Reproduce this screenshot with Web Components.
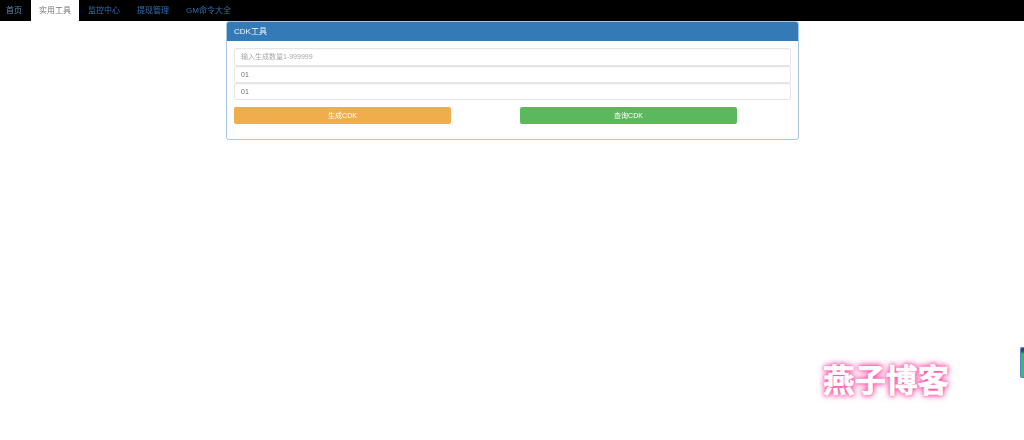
<!DOCTYPE html>
<html>
<head>
<meta charset="utf-8">
<title>CDK工具</title>
<style>
  html, body { margin: 0; padding: 0; background: #fff; }
  body { width: 1024px; height: 440px; overflow: hidden; position: relative; font-family: "Liberation Sans", "Noto Sans CJK SC", sans-serif; }
</style>
</head>
<body>
<top-nav>
  <nav-item>首页</nav-item>
  <nav-item active>实用工具</nav-item>
  <nav-item>监控中心</nav-item>
  <nav-item>提现管理</nav-item>
  <nav-item>GM命令大全</nav-item>
</top-nav>

<cdk-panel heading="CDK工具">
  <text-field placeholder="输入生成数量1-999999"></text-field>
  <text-field value="01"></text-field>
  <text-field value="01"></text-field>
  <div slot="actions"><action-button kind="warning">生成CDK</action-button></div>
  <div slot="actions"><action-button kind="success">查询CDK</action-button></div>
</cdk-panel>

<blog-mark>燕子博客</blog-mark>
<side-tab></side-tab>

<script>
  class TopNav extends HTMLElement {
    constructor() {
      super();
      this.attachShadow({mode: 'open'}).innerHTML = `
        <style>
          :host { display: flex; height: 21px; background: #000; }
        </style>
        <slot></slot>`;
    }
  }

  class NavItem extends HTMLElement {
    constructor() {
      super();
      this.attachShadow({mode: 'open'}).innerHTML = `
        <style>
          :host { display: block; height: 21px; line-height: 21px; padding: 0 8.5px; font-size: 8px; color: #2f6fb3; }
          :host(:first-child) { padding: 0 9px 0 6px; color: #5f8db8; }
          :host(:nth-child(3)) { padding-left: 9px; }
          :host([active]) { background: #fff; color: #777; padding: 0 8px; }
          span { display: block; filter: blur(.3px); }
        </style>
        <span><slot></slot></span>`;
    }
  }

  class CdkPanel extends HTMLElement {
    constructor() {
      super();
      this.attachShadow({mode: 'open'}).innerHTML = `
        <style>
          :host { display: block; box-sizing: border-box; width: 573px; height: 119px; margin: 0 0 0 226px; border: 1px solid #a6c8e4; border-radius: 3px; background: #fff; overflow: hidden; }
          header { box-sizing: border-box; height: 19px; line-height: 19px; padding: 0 7px; background: #337ab7; color: #f2f6fa; font-size: 8px; }
          header span { display: block; filter: blur(.3px); }
          .body { display: flex; flex-direction: column; padding: 7px 7px 0; }
          .actions { display: grid; grid-template-columns: 286px 1fr; margin-top: 7px; }
        </style>
        <header><span></span></header>
        <div class="body">
          <slot></slot>
          <div class="actions"><slot name="actions"></slot></div>
        </div>`;
      this.shadowRoot.querySelector('header span').textContent = this.getAttribute('heading');
    }
  }

  class TextField extends HTMLElement {
    constructor() {
      super();
      this.attachShadow({mode: 'open'}).innerHTML = `
        <style>
          :host { display: block; height: 17px; }
          :host(:first-child) { height: 18px; }
          div { box-sizing: border-box; height: 100%; line-height: 16px; padding: 0 6px; border: 1px solid #e6e6e6; border-radius: 2px; background: #fff; box-shadow: inset 0 1px 1px rgba(0,0,0,.03); font-size: 7px; color: #707070; white-space: nowrap; }
          span { filter: blur(.3px); display: inline-block; }
          .hint { color: #a8a8a8; }
        </style>
        <div><span></span></div>`;
      const box = this.shadowRoot.querySelector('span');
      if (this.hasAttribute('value')) {
        box.textContent = this.getAttribute('value');
      } else {
        box.textContent = this.getAttribute('placeholder');
        box.className = 'hint';
      }
    }
  }

  class ActionButton extends HTMLElement {
    constructor() {
      super();
      this.attachShadow({mode: 'open'}).innerHTML = `
        <style>
          :host { display: block; width: 217px; height: 17px; line-height: 17px; border-radius: 2px; text-align: center; color: #fff; font-size: 7px; }
          :host([kind="warning"]) { background: #f0ad4e; }
          :host([kind="success"]) { background: #5cb85c; }
          span { display: inline-block; filter: blur(.3px); }
        </style>
        <span><slot></slot></span>`;
    }
  }

  // floats over the page, bottom right
  class BlogMark extends HTMLElement {
    constructor() {
      super();
      this.attachShadow({mode: 'open'}).innerHTML = `
        <style>
          :host { position: absolute; left: 823px; top: 358px; font-family: "Noto Sans CJK SC", sans-serif; font-weight: 700; font-size: 31.5px; line-height: 40px; color: #fff; white-space: nowrap;
            -webkit-text-stroke: .7px #fff;
            text-shadow: 0 0 2px #ff4fa6, 0 0 4px #ff4fa6, 0 0 6px #ff5fae, 0 0 9px #ff8cc8; }
        </style>
        <slot></slot>`;
    }
  }

  class SideTab extends HTMLElement {
    constructor() {
      super();
      this.attachShadow({mode: 'open'}).innerHTML = `
        <style>
          :host { position: absolute; left: 1020px; top: 347px; width: 4px; height: 31px; box-sizing: border-box; border: 1px solid #5a7fc4; border-right: 0; border-radius: 2px 0 0 2px; background: linear-gradient(#3a4a48 0, #3a4a48 3px, #26c264 6px, #2fc468); }
        </style>`;
    }
  }

  customElements.define('top-nav', TopNav);
  customElements.define('nav-item', NavItem);
  customElements.define('cdk-panel', CdkPanel);
  customElements.define('text-field', TextField);
  customElements.define('action-button', ActionButton);
  customElements.define('blog-mark', BlogMark);
  customElements.define('side-tab', SideTab);
</script>
</body>
</html>
